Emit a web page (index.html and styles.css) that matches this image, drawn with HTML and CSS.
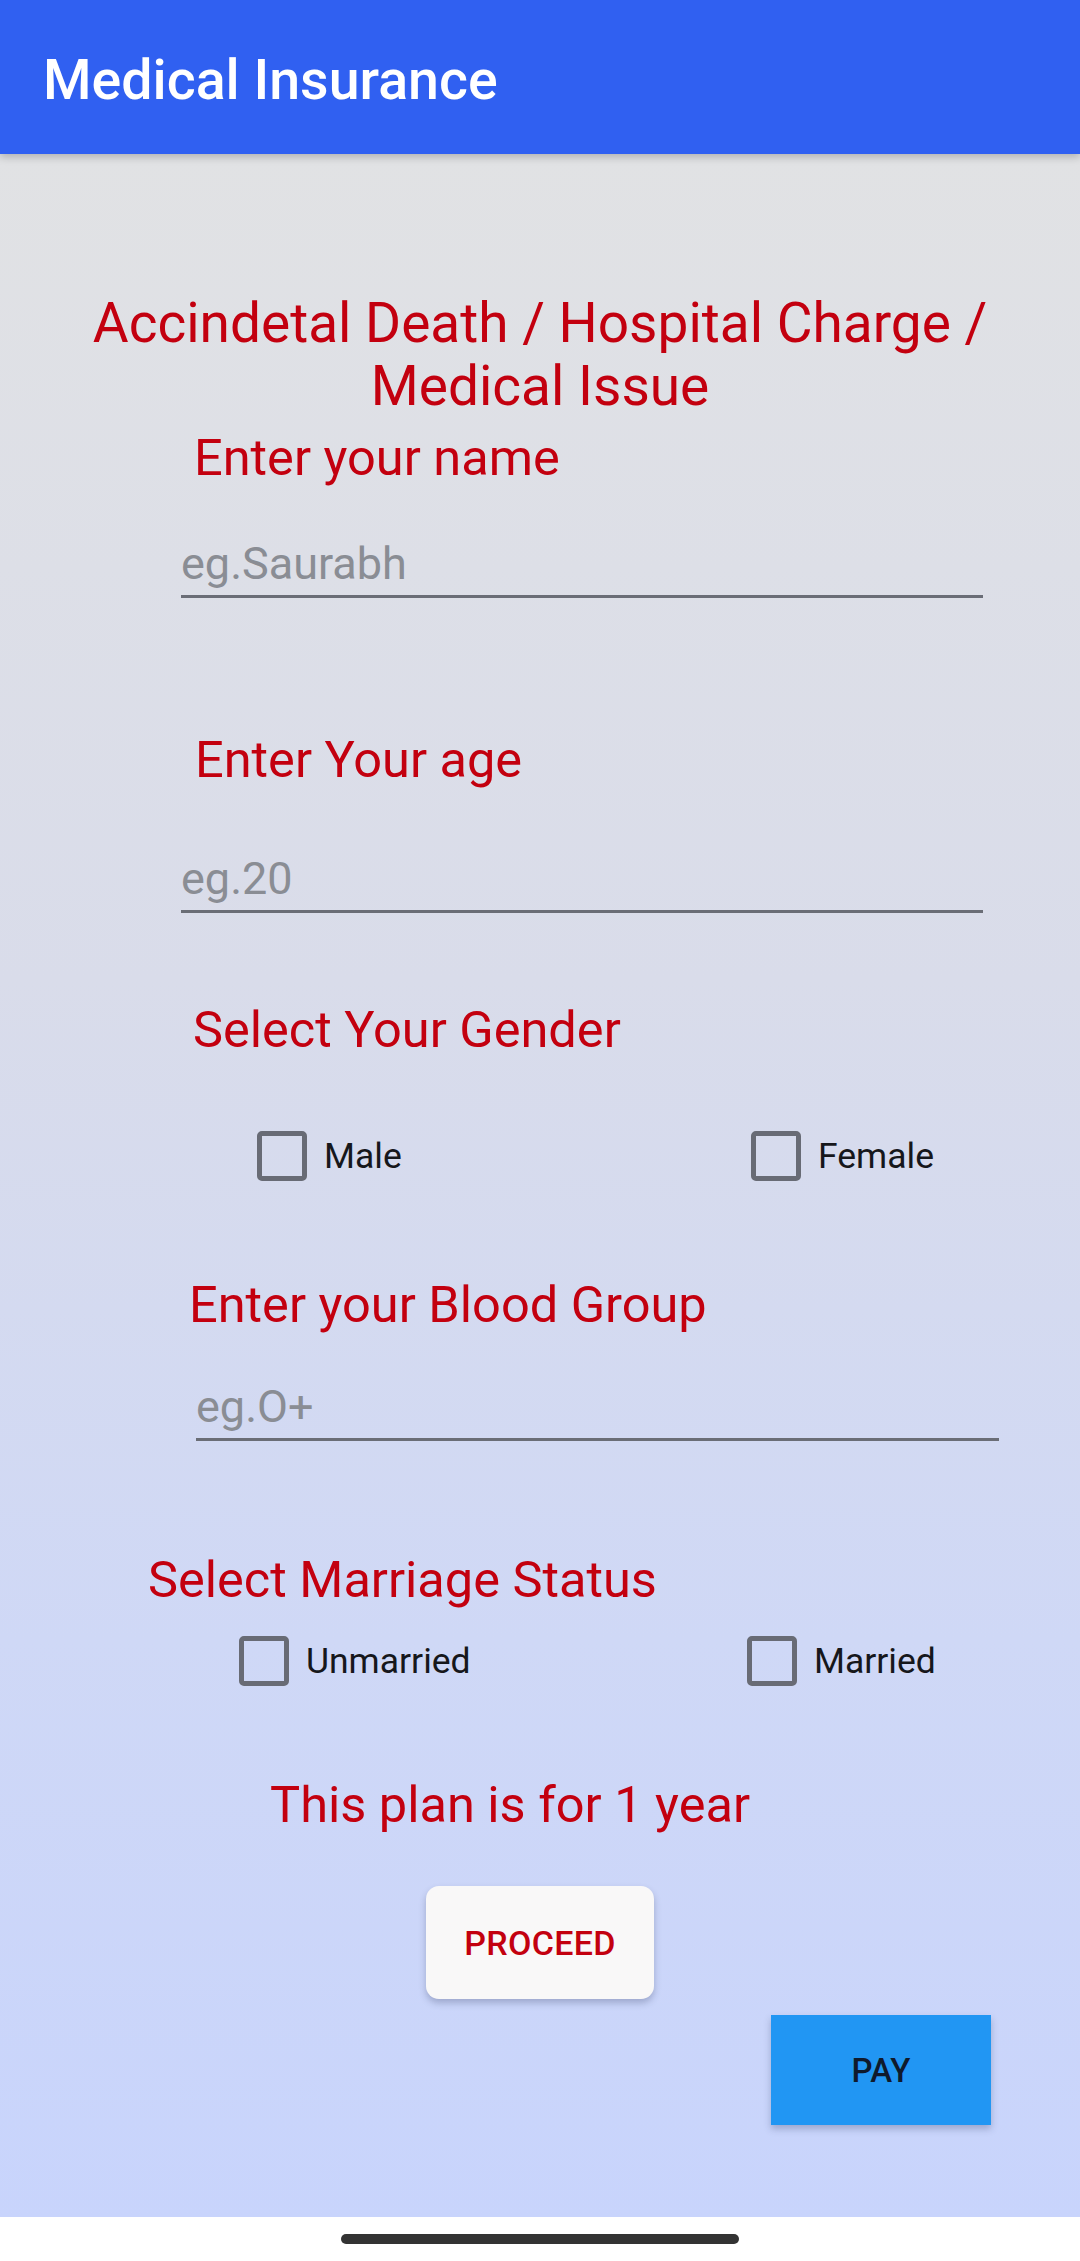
FILE: index.html
```html
<!DOCTYPE html>
<html lang="en">
<head>
<meta charset="utf-8">
<title>Medical Insurance</title>
<link rel="stylesheet" href="styles.css">
</head>
<body>
<div class="app">
  <header class="appbar">
    <h1 class="appbar-title">Medical Insurance</h1>
  </header>
  <main class="content">
    <h2 class="headline">Accindetal Death / Hospital Charge / Medical Issue</h2>

    <label class="label label-name">Enter your name</label>
    <input class="field field-name" type="text" placeholder="eg.Saurabh">

    <label class="label label-age">Enter Your age</label>
    <input class="field field-age" type="text" placeholder="eg.20">

    <div class="label label-gender">Select Your Gender</div>
    <div class="choice-row gender-row">
      <label class="choice"><span class="box"></span><span class="choice-text">Male</span></label>
      <label class="choice"><span class="box"></span><span class="choice-text">Female</span></label>
    </div>

    <label class="label label-blood">Enter your Blood Group</label>
    <input class="field field-blood" type="text" placeholder="eg.O+">

    <div class="label label-marriage">Select Marriage Status</div>
    <div class="choice-row marriage-row">
      <label class="choice"><span class="box"></span><span class="choice-text">Unmarried</span></label>
      <label class="choice"><span class="box"></span><span class="choice-text">Married</span></label>
    </div>

    <div class="label plan-note">This plan is for 1 year</div>

    <button class="btn-proceed" type="button">PROCEED</button>
    <button class="btn-pay" type="button">PAY</button>
  </main>
  <footer class="navbar"><span class="nav-pill"></span></footer>
</div>
</body>
</html>
```

FILE: styles.css
```css
* { box-sizing: border-box; }

html, body {
  margin: 0;
  padding: 0;
}

body {
  width: 1080px;
  height: 2261px;
  font-family: Roboto, "Noto Sans", "Liberation Sans", sans-serif;
  background: #ffffff;
}

.app {
  display: flex;
  flex-direction: column;
  height: 2261px;
}

.appbar {
  height: 154px;
  flex: 0 0 154px;
  background: #3060f1;
  padding: 49px 0 0 43px;
  box-shadow: 0 3px 8px rgba(0, 0, 0, 0.22);
  position: relative;
  z-index: 1;
}

.appbar-title {
  margin: 0;
  font-size: 55.5px;
  line-height: 64px;
  font-weight: 500;
  color: #ffffff;
}

.content {
  flex: 1 1 auto;
  display: flex;
  flex-direction: column;
  align-items: flex-start;
  background: linear-gradient(180deg, #e1e2e4 0%, #d9dcea 40%, #cfd8f6 72%, #c8d4fc 100%);
}

.headline {
  align-self: stretch;
  margin: 138px 0 0 0;
  padding: 0 50px;
  text-align: center;
  font-size: 55px;
  line-height: 63px;
  font-weight: 400;
  color: #c3000f;
}

.label {
  display: block;
  font-size: 50.5px;
  line-height: 57px;
  font-weight: 400;
  color: #c3000f;
}

.label-name { margin: 11px 0 0 194px; }
.label-age { margin: 133px 0 0 195px; }
.label-gender { margin: 88px 0 0 193px; }
.label-blood { margin: 95px 0 0 189px; }
.label-marriage { margin: 110px 0 0 148px; }
.plan-note { margin: 90px 0 0 270px; }

.field {
  display: block;
  height: 60px;
  padding: 0 0 7px 0;
  border: 0;
  border-bottom: 3px solid #6a6d76;
  background: transparent;
  font-family: Roboto, "Noto Sans", "Liberation Sans", sans-serif;
  font-size: 45px;
  line-height: 50px;
  color: #222;
  outline: none;
  border-radius: 0;
}

.field::placeholder {
  color: #8a8d94;
  opacity: 1;
}

.field-name { margin: 52px 0 0 181px; width: 802px; }
.field-age { margin: 65px 0 0 181px; width: 802px; }
.field-blood { margin: 48px 0 0 196px; width: 803px; }

.choice-row {
  display: grid;
  align-items: center;
}

.gender-row {
  margin: 73px 0 0 257px;
  grid-template-columns: 494px auto;
}

.marriage-row {
  margin: 28px 0 0 239px;
  grid-template-columns: 508px auto;
}

.choice {
  display: flex;
  align-items: center;
  gap: 17px;
}

.box {
  width: 50px;
  height: 50px;
  border: 5px solid #686b75;
  border-radius: 5px;
}

.choice-text {
  font-size: 35.5px;
  line-height: 42px;
  color: #16171b;
}

.btn-proceed {
  margin: 53px 0 0 426px;
  width: 228px;
  height: 113px;
  border: 0;
  border-radius: 13px;
  background: #f9f8f8;
  box-shadow: 0 4px 7px rgba(40, 50, 90, 0.28);
  font-family: Roboto, "Noto Sans", "Liberation Sans", sans-serif;
  font-size: 34px;
  font-weight: 500;
  letter-spacing: 0.3px;
  color: #c3000f;
  padding: 0;
}

.btn-pay {
  margin: 16px 0 0 771px;
  width: 220px;
  height: 110px;
  border: 0;
  border-radius: 0;
  background: #2196f3;
  box-shadow: 0 4px 7px rgba(40, 50, 90, 0.28);
  font-family: Roboto, "Noto Sans", "Liberation Sans", sans-serif;
  font-size: 33px;
  font-weight: 500;
  color: #0f1a2c;
  padding: 0;
}

.navbar {
  flex: 0 0 44px;
  height: 44px;
  background: #ffffff;
  display: flex;
  justify-content: center;
  padding-top: 17px;
}

.nav-pill {
  width: 398px;
  height: 10px;
  border-radius: 5px;
  background: #333333;
}
```
